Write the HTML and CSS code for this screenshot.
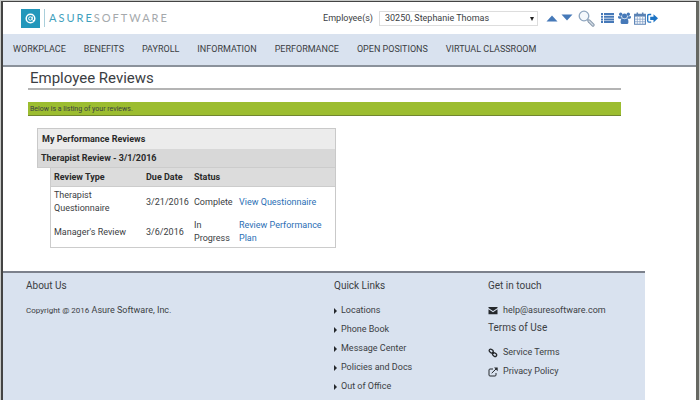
FILE: index.html
```html
<!DOCTYPE html>
<html lang="en">
<head>
  <meta charset="utf-8">
  <title>Employee Reviews</title>
  <link rel="stylesheet" href="styles.css">
</head>
<body>
  <div class="page">
    <header class="topbar">
      <a class="logo" href="#">
        <svg class="logo-mark" viewBox="0 0 19 19">
          <rect width="19" height="19" fill="#2397bb"/>
          <circle cx="9.500" cy="9.500" r="4.300" fill="none" stroke="#fff" stroke-width="1.500"/>
          <circle cx="9.300" cy="9.500" r="1.700" fill="none" stroke="#fff" stroke-width="1"/>
          <path d="M11.300 7.500v3q.3 1.500 1.800 1" fill="none" stroke="#fff" stroke-width="1"/>
        </svg>
        <span class="logo-text"><span class="logo-accent">ASURE</span>SOFTWARE</span>
      </a>
      <div class="tools">
        <label for="employee">Employee(s)</label>
        <div class="picker">
          <select id="employee">
            <option>30250, Stephanie Thomas</option>
          </select>
        </div>
        <button class="tool tool-up" aria-label="Previous employee">
          <svg width="12" height="12" viewBox="0 0 12 12"><path d="M0.500 9.500L6 3.500 11.500 9.500z" fill="#4679b8"/></svg>
        </button>
        <button class="tool tool-down" aria-label="Next employee">
          <svg width="12" height="12" viewBox="0 0 12 12"><path d="M0.500 2.500L6 8.500l5.500-6z" fill="#4679b8"/></svg>
        </button>
        <button class="tool tool-search" aria-label="Search">
          <svg width="17" height="17" viewBox="0 0 17 17">
            <circle cx="6" cy="6" r="4.800" fill="#f4f8fc" stroke="#8fa6bf" stroke-width="1.300"/>
            <path d="M9.500 9.500l1.500 1.500" stroke="#8fa6bf" stroke-width="1.500"/>
            <path d="M11 11l4 4" stroke="#8798ab" stroke-width="3.200" stroke-linecap="round"/>
            <path d="M11 11l4 4" stroke="#d4dde7" stroke-width="1.300" stroke-linecap="round"/>
          </svg>
        </button>
        <button class="tool tool-list" aria-label="List">
          <svg width="13" height="12" viewBox="0 0 13 12" fill="#4679b8">
            <path d="M0 1h2v2H0zM3 1h10v2H3zM0 3.700h2v2H0zM3 3.700h10v2H3zM0 6.400h2v2H0zM3 6.400h10v2H3zM0 9.100h2v2H0zM3 9.100h10v2H3z"/>
          </svg>
        </button>
        <button class="tool tool-team" aria-label="Team">
          <svg width="13" height="12" viewBox="0 0 13 12" fill="#4679b8">
            <circle cx="2.700" cy="2.200" r="1.700"/>
            <circle cx="10.300" cy="2.200" r="1.700"/>
            <path d="M0 4.300h3.300q0 1.500 1 2.400H1.200Q0 6.700 0 5.600zM13 4.300H9.700q0 1.500-1 2.400h3.100q1.200 0 1.200-1.100z"/>
            <circle cx="6.500" cy="4" r="2.500"/>
            <path d="M2.600 9.600q0-3 2-3 1.900 1.300 3.800 0 2 0 2 3v.8q0 1.500-1.500 1.500H4.100q-1.500 0-1.500-1.500z"/>
          </svg>
        </button>
        <button class="tool tool-calendar" aria-label="Calendar">
          <svg width="12" height="13" viewBox="0 0 12 13">
            <path d="M.6 2.400h10.800v9.900H.6z" fill="#fff" stroke="#5b83b5" stroke-width="1.100"/>
            <path d="M.6 2.400h10.800v2.200H.6z" fill="#5b83b5"/>
            <path d="M3.300 5v7M6 5v7M8.700 5v7M1 7.200h10M1 9.700h10" stroke="#7b9bc4" stroke-width=".7"/>
            <path d="M3.300 .5v2.800M8.700 .5v2.800" stroke="#5b83b5" stroke-width="1.500"/>
          </svg>
        </button>
        <button class="tool tool-exit" aria-label="Sign out">
          <svg width="11" height="11" viewBox="0 0 11 11">
            <path d="M4.200 1.500H2Q.7 1.500.7 2.800v5Q.7 9.100 2 9.100h2.200" fill="none" stroke="#1c73c4" stroke-width="1.300"/>
            <path d="M3.200 3.700h3.300V1.200L11 5.300 6.500 9.500V7H3.200z" fill="#1c73c4"/>
          </svg>
        </button>
      </div>
    </header>

    <nav class="menu">
      <a href="#">WORKPLACE</a>
      <a href="#">BENEFITS</a>
      <a href="#">PAYROLL</a>
      <a href="#">INFORMATION</a>
      <a href="#">PERFORMANCE</a>
      <a href="#">OPEN POSITIONS</a>
      <a href="#">VIRTUAL CLASSROOM</a>
    </nav>

    <main class="content">
      <h1>Employee Reviews</h1>
      <p class="notice">Below is a listing of your reviews.</p>

      <section class="reviews">
        <h2 class="reviews-title">My Performance Reviews</h2>
        <h3 class="reviews-group">Therapist Review - 3/1/2016</h3>
        <table class="review-table">
          <thead>
            <tr>
              <th class="col-type">Review Type</th>
              <th class="col-date">Due Date</th>
              <th class="col-status">Status</th>
              <th></th>
            </tr>
          </thead>
          <tbody>
            <tr>
              <td>Therapist Questionnaire</td>
              <td>3/21/2016</td>
              <td>Complete</td>
              <td><a href="#">View Questionnaire</a></td>
            </tr>
            <tr>
              <td>Manager's Review</td>
              <td>3/6/2016</td>
              <td>In Progress</td>
              <td><a href="#">Review Performance Plan</a></td>
            </tr>
          </tbody>
        </table>
      </section>
    </main>

    <footer class="footer">
      <section class="about">
        <h4>About Us</h4>
        <p><small>Copyright @ 2016</small> Asure Software, Inc.</p>
      </section>
      <section class="quick">
        <h4>Quick Links</h4>
        <ul>
          <li><a href="#">Locations</a></li>
          <li><a href="#">Phone Book</a></li>
          <li><a href="#">Message Center</a></li>
          <li><a href="#">Policies and Docs</a></li>
          <li><a href="#">Out of Office</a></li>
        </ul>
      </section>
      <section class="touch">
        <h4>Get in touch</h4>
        <a class="contact" href="#">
          <svg width="10" height="10" viewBox="0 0 10 10" fill="#25282c">
            <path d="M.5 1h9v1L5 5 .5 2zM.5 3.200L5 6.200l4.500-3v5h-9z"/>
          </svg>
          help@asuresoftware.com
        </a>
        <h4>Terms of Use</h4>
        <a class="contact" href="#">
          <svg width="10" height="10" viewBox="0 0 10 10" fill="none" stroke="#25282c" stroke-width="1.300">
            <rect x="1" y="1.500" width="4.500" height="3" rx="1.500" transform="rotate(40 3.200 3)"/>
            <rect x="4.300" y="5" width="4.500" height="3" rx="1.500" transform="rotate(40 6.500 6.500)"/>
            <path d="M4 4l2 1.800"/>
          </svg>
          Service Terms
        </a>
        <a class="contact" href="#">
          <svg width="10" height="10" viewBox="0 0 10 10">
            <path d="M5 2H2Q1 2 1 3v5q0 1 1 1h5q1 0 1-1V6M3.700 6.200L8 2" fill="none" stroke="#25282c" stroke-width="1"/>
            <path d="M6 .5h3.700v3.700z" fill="#25282c"/>
          </svg>
          Privacy Policy
        </a>
      </section>
    </footer>
  </div>
</body>
</html>
```

FILE: styles.css
```css
* {
  box-sizing: border-box;
}

body {
  margin: 0;
  padding: 1px 1px 0;
  background-color: #c8cac8;
  color: #3b3e43;
  font-family: Roboto, "Liberation Sans", sans-serif;
  font-size: 9px;
  line-height: 13px;
}

h1, h2, h3, h4, p, ul {
  margin: 0;
  padding: 0;
}

a {
  color: inherit;
  text-decoration: none;
}

.page {
  display: flex;
  flex-direction: column;
  min-height: calc(100vh - 1px);
  border: solid #444;
  border-width: 1px 3px 0 2px;
  border-right-color: #666862;
  background-color: white;
}

/* top bar */
.topbar {
  display: flex;
  align-items: center;
  justify-content: space-between;
  height: 32px;
  padding: 0 38px 0 18px;
}

.logo {
  display: flex;
  align-items: center;
}

.logo-mark {
  width: 19px;
  height: 19px;
}

.logo-text {
  margin-left: 4px;
  padding-left: 4px;
  border-left: 1px solid #a9cfdb;
  color: #a5a9ac;
  font-family: Lato, sans-serif;
  font-size: 11px;
  line-height: 18px;
  letter-spacing: 2px;
}

.logo-accent {
  color: #3f9fbd;
}

.tools {
  display: flex;
  align-items: center;
}

.picker {
  position: relative;
  margin: 0 8px 0 6px;
}

.picker::after {
  content: "";
  position: absolute;
  top: 6px;
  right: 4px;
  border: 2px solid transparent;
  border-top: 4px solid #222;
  border-bottom: 0;
}

.picker select {
  display: block;
  width: 159px;
  height: 15px;
  padding: 0 5px;
  border: 1px solid #ddd;
  border-radius: 0;
  background-color: white;
  color: #3b3e43;
  font-family: inherit;
  font-size: 9px;
  appearance: none;
}

.tool {
  display: flex;
  padding: 0;
  border: 0;
  background: none;
  cursor: pointer;
}

.tool-down {
  margin-left: 3px;
}

.tool-search {
  margin-left: 5px;
}

.tool-list {
  margin-left: 6px;
}

.tool-team {
  margin-left: 4px;
}

.tool-calendar {
  margin-left: 3px;
}

.tool-exit {
  margin-left: 1px;
}

/* main menu */
.menu {
  display: flex;
  align-items: center;
  gap: 18px;
  height: 33px;
  padding: 0 10px;
  border-bottom: 2px solid #8b929b;
  background-color: #d9e2ef;
}

/* content */
.content {
  padding: 0 75px 23px 25px;
}

h1 {
  padding: 2px 2px 0;
  border-bottom: 2px solid #b4b4b4;
  font-size: 15px;
  font-weight: 400;
  line-height: 19px;
}

.notice {
  margin-top: 12px;
  padding: 1px 2px 0;
  border-bottom: 1px solid #71862f;
  background-color: #9cbd30;
  font-size: 7px;
  line-height: 12px;
}

.reviews {
  width: 299px;
  margin: 12px 0 0 9px;
  border: 1px solid #c9c9c9;
  border-bottom: 0;
  border-left: 0;
}

.reviews-title,
.reviews-group {
  border-left: 1px solid #c9c9c9;
  color: #2a2a2a;
  font-size: 9px;
  font-weight: 700;
}

.reviews-title {
  padding: 0 4px;
  background-color: #ececec;
  line-height: 20px;
}

.reviews-group {
  padding: 0 3px;
  border-bottom: 1px solid #ccc;
  background-color: #d8d8d8;
  line-height: 18px;
}

.review-table {
  width: 285px;
  margin-left: auto;
  border: 1px solid #ccc;
  border-width: 0 0 1px 1px;
  border-collapse: separate;
  border-spacing: 0;
  table-layout: fixed;
}

.review-table th {
  height: 19px;
  padding: 0 3px;
  border-bottom: 1px solid #ccc;
  background-color: #dcdcdc;
  color: #2a2a2a;
  font-weight: 700;
  text-align: left;
}

.review-table td {
  padding: 2px 0 2px 3px;
}

.review-table td a {
  color: #2c6fb5;
}

.col-type {
  width: 92px;
}

.col-date {
  width: 48px;
}

.col-status {
  width: 45px;
}

/* footer */
.footer {
  display: grid;
  grid-template-columns: 308px 154px 1fr;
  flex: 1;
  margin-right: 51px;
  padding: 5px 0 0 23px;
  border-top: 2px solid #7c818c;
  background-color: #d9e2ef;
}

.footer h4 {
  font-size: 10px;
  font-weight: 400;
  line-height: 15px;
}

.about p {
  margin-top: 11px;
}

.about small {
  font-size: 8px;
}

.quick ul {
  display: grid;
  gap: 6px;
  margin-top: 11px;
  list-style: none;
}

.quick a {
  display: flex;
  align-items: center;
  gap: 4px;
}

.quick a::before {
  content: "";
  border: 3px solid transparent;
  border-left-color: #25282c;
  border-right: 0;
}

.contact {
  display: flex;
  align-items: center;
  gap: 5px;
  margin-bottom: 6px;
}

.touch h4 + .contact {
  margin-top: 11px;
}

.touch .contact + h4 {
  margin-top: -3px;
}
```
